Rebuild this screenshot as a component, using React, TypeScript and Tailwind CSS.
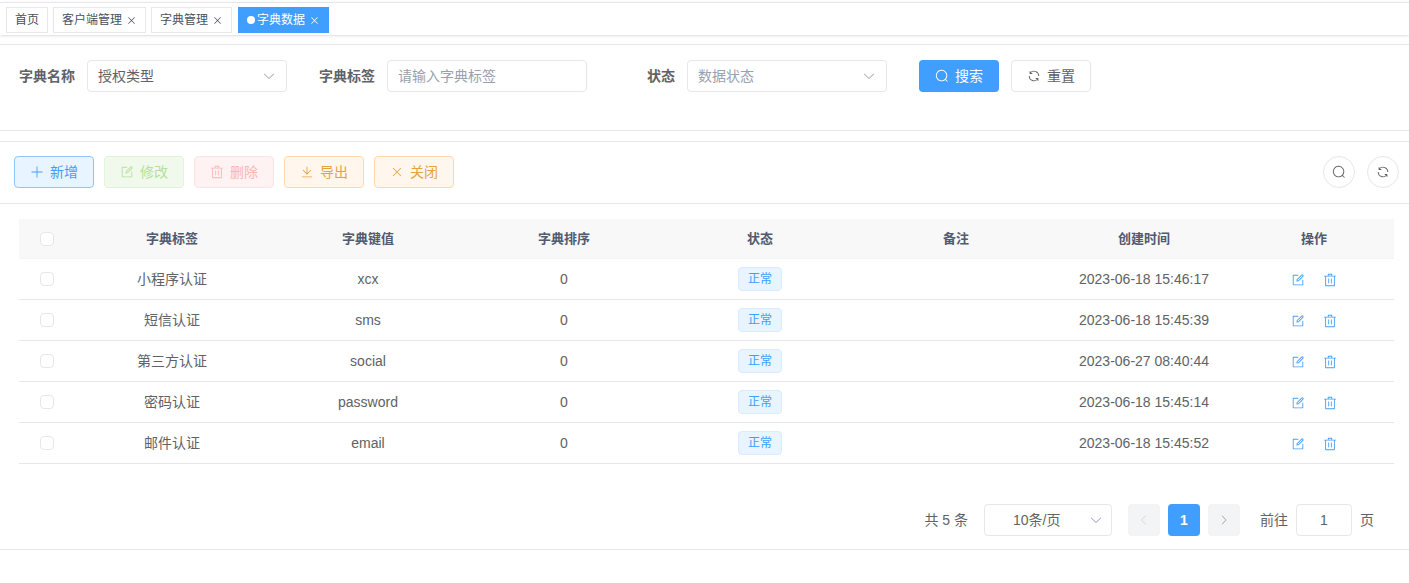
const rows = [
  { label: "小程序认证", value: "xcx", time: "2023-06-18 15:46:17" },
  { label: "短信认证", value: "sms", time: "2023-06-18 15:45:39" },
  { label: "第三方认证", value: "social", time: "2023-06-27 08:40:44" },
  { label: "密码认证", value: "password", time: "2023-06-18 15:45:14" },
  { label: "邮件认证", value: "email", time: "2023-06-18 15:45:52" },
];

const headers = ["字典标签", "字典键值", "字典排序", "状态", "备注", "创建时间", "操作"];

const gridCols = "grid grid-cols-[55px_repeat(5,1fr)_180px_160px] items-center text-center";

const icons = {
  search:
    "m795.904 750.72 124.992 124.928a32 32 0 0 1-45.248 45.248L750.656 795.904a416 416 0 1 1 45.248-45.248zM480 832a352 352 0 1 0 0-704 352 352 0 0 0 0 704z",
  refresh:
    "M771.776 794.88A384 384 0 0 1 128 512h64a320 320 0 0 0 555.712 216.448H654.72a32 32 0 1 1 0-64h149.056a32 32 0 0 1 32 32v148.928a32 32 0 1 1-64 0v-50.56zM276.288 295.616h92.992a32 32 0 0 1 0 64H220.16a32 32 0 0 1-32-32V178.56a32 32 0 0 1 64 0v50.56A384 384 0 0 1 896.128 512h-64a320 320 0 0 0-555.776-216.384z",
  plus: "M480 480V128a32 32 0 0 1 64 0v352h352a32 32 0 1 1 0 64H544v352a32 32 0 1 1-64 0V544H128a32 32 0 0 1 0-64h352z",
  edit: "M832 512a32 32 0 1 1 64 0v352a32 32 0 0 1-32 32H160a32 32 0 0 1-32-32V160a32 32 0 0 1 32-32h352a32 32 0 0 1 0 64H192v640h640V512z m-362.048 42.24 52.8-7.552L847.104 222.4a32 32 0 1 0-45.248-45.248L477.44 501.44l-7.552 52.8zm422.4-422.4a96 96 0 0 1 0 135.808l-331.84 331.84a32 32 0 0 1-18.112 9.088L436.8 623.68a32 32 0 0 1-36.224-36.224l15.104-105.6a32 32 0 0 1 9.024-18.112l331.904-331.84a96 96 0 0 1 135.744 0z",
  trash:
    "M160 256H96a32 32 0 0 1 0-64h256V95.936a32 32 0 0 1 32-32h256a32 32 0 0 1 32 32V192h256a32 32 0 1 1 0 64h-64v672a32 32 0 0 1-32 32H192a32 32 0 0 1-32-32V256zm448-64v-64H416v64h192zM224 896h576V256H224v640zm192-128a32 32 0 0 1-32-32V416a32 32 0 0 1 64 0v320a32 32 0 0 1-32 32zm192 0a32 32 0 0 1-32-32V416a32 32 0 0 1 64 0v320a32 32 0 0 1-32 32z",
  download:
    "M160 832h704a32 32 0 1 1 0 64H160a32 32 0 1 1 0-64zm384-253.696 236.288-236.352 45.248 45.248L508.8 704 192 387.2l45.248-45.248L480 584.704V128h64v450.304z",
  close:
    "M764.288 214.592 512 466.88 259.712 214.592a31.936 31.936 0 0 0-45.12 45.12L466.752 512 214.528 764.224a31.936 31.936 0 1 0 45.12 45.184L512 557.184l252.288 252.288a31.936 31.936 0 0 0 45.12-45.12L557.12 512.064l252.288-252.352a31.936 31.936 0 1 0-45.12-45.184z",
  down: "M831.872 340.864 512 652.672 192.128 340.864a30.592 30.592 0 0 0-42.752 0 29.12 29.12 0 0 0 0 41.6L489.664 714.24a32 32 0 0 0 44.672 0l340.288-331.712a29.12 29.12 0 0 0 0-41.728 30.592 30.592 0 0 0-42.752 0z",
  left: "M609.408 149.376 277.76 489.6a32 32 0 0 0 0 44.672l331.648 340.352a29.12 29.12 0 0 0 41.728 0 30.592 30.592 0 0 0 0-42.752L339.264 511.936l311.872-319.872a30.592 30.592 0 0 0 0-42.688 29.12 29.12 0 0 0-41.728 0z",
  right:
    "M340.864 149.312a30.592 30.592 0 0 0 0 42.752L652.736 512 340.864 831.872a30.592 30.592 0 0 0 0 42.752 29.12 29.12 0 0 0 41.728 0L714.24 534.336a32 32 0 0 0 0-44.672L382.592 149.376a29.12 29.12 0 0 0-41.728 0z",
};

function Icon({ name, className = "size-3.5" }: { name: keyof typeof icons; className?: string }) {
  return (
    <svg viewBox="0 0 1024 1024" fill="currentColor" className={className}>
      <path d={icons[name]} />
    </svg>
  );
}

function TagItem({ name, closable = true }: { name: string; closable?: boolean }) {
  return (
    <div className="flex h-6.5 items-center gap-1 border border-gray-200 bg-white px-2 text-xs text-[#495060]">
      {name}
      {closable && <Icon name="close" className="size-2.75" />}
    </div>
  );
}

function FormSelect({ text, placeholder }: { text: string; placeholder?: boolean }) {
  return (
    <div className="flex h-8 w-50 items-center justify-between rounded border border-gray-200 px-2.5 text-sm">
      <span className={placeholder ? "text-gray-400" : ""}>{text}</span>
      <Icon name="down" className="size-3.5 text-gray-400" />
    </div>
  );
}

function Label({ text }: { text: string }) {
  return <label className="w-14 text-right text-sm font-bold">{text}</label>;
}

function ToolButton({ icon, text, className }: { icon: React.ReactNode; text: string; className: string }) {
  return (
    <button className={`flex h-8 w-20 items-center justify-center gap-1.5 rounded border text-sm ${className}`}>
      {icon}
      {text}
    </button>
  );
}

export default function App() {
  return (
    <div
      className="min-h-screen bg-white pt-0.5 text-[#606266]"
      style={{ fontFamily: '"Liberation Sans", "Noto Sans CJK SC", sans-serif' }}
    >
      {/* Tags bar */}
      <div className="flex h-8.25 items-start gap-1.25 border-t border-gray-200 pt-1 pl-1.5 shadow">
        <TagItem name="首页" closable={false} />
        <TagItem name="客户端管理" />
        <TagItem name="字典管理" />
        <div className="ml-0.25 flex h-6.5 items-center gap-1 bg-[#409eff] px-2.25 text-xs text-white">
          <span className="flex items-center gap-0.5">
            <span className="size-2 rounded-full bg-white" />
            字典数据
          </span>
          <Icon name="close" className="size-2.75" />
        </div>
      </div>

      {/* Search form */}
      <div className="mt-2.25 h-21.75 border-y border-gray-200 pt-3.75 pl-4.75">
        <div className="flex items-center">
          <Label text="字典名称" />
          <div className="mr-8 ml-3">
            <FormSelect text="授权类型" />
          </div>
          <Label text="字典标签" />
          <input
            readOnly
            placeholder="请输入字典标签"
            className="mr-8 ml-3 h-8 w-50 rounded border border-gray-200 px-2.5 text-sm placeholder:text-gray-400"
          />
          <Label text="状态" />
          <div className="mr-8 ml-3">
            <FormSelect text="数据状态" placeholder />
          </div>
          <button className="flex h-8 w-20 items-center justify-center gap-1.5 rounded bg-[#409eff] text-sm text-white">
            <Icon name="search" />
            搜索
          </button>
          <button className="ml-3 flex h-8 w-20 items-center justify-center gap-1.5 rounded border border-gray-200 text-sm">
            <Icon name="refresh" />
            重置
          </button>
        </div>
      </div>

      {/* Table card */}
      <div className="mt-2.5 border-y border-gray-200">
        <div className="flex items-center justify-between border-b border-gray-200 pt-3.5 pr-2.5 pb-3.75 pl-3.5">
          <div className="flex gap-2.5">
            <ToolButton
              icon={<Icon name="plus" />}
              text="新增"
              className="border-blue-300 bg-[#e8f4ff] text-[#409eff]"
            />
            <ToolButton
              icon={<Icon name="edit" />}
              text="修改"
              className="border-[#e1f3d8] bg-[#f0f9eb] text-[#b3e19d]"
            />
            <ToolButton
              icon={<Icon name="trash" />}
              text="删除"
              className="border-red-100 bg-red-50 text-[#fab6b6]"
            />
            <ToolButton
              icon={<Icon name="download" />}
              text="导出"
              className="border-orange-200 bg-orange-50 text-[#e6a23c]"
            />
            <ToolButton
              icon={<Icon name="close" />}
              text="关闭"
              className="border-orange-200 bg-orange-50 text-[#e6a23c]"
            />
          </div>
          <div className="flex gap-3">
            <button className="flex size-8 items-center justify-center rounded-full border border-gray-200">
              <Icon name="search" />
            </button>
            <button className="flex size-8 items-center justify-center rounded-full border border-gray-200">
              <Icon name="refresh" />
            </button>
          </div>
        </div>

        <div className="pt-3.75 pr-3.75 pl-4.75">
          <div className={`${gridCols} h-10 border-b border-gray-100 bg-[#f8f8f9] text-[13px] font-bold text-[#515a6e]`}>
            <span className="mx-auto size-3.5 rounded-sm border border-gray-200 bg-white" />
            {headers.map((h) => (
              <span key={h}>{h}</span>
            ))}
          </div>
          {rows.map((row) => (
            <div key={row.value} className="border-b border-gray-200">
              <div className={`${gridCols} h-10 text-sm`}>
                <span className="mx-auto size-3.5 rounded-sm border border-gray-200 bg-white" />
                <span>{row.label}</span>
                <span>{row.value}</span>
                <span>0</span>
                <span className="mx-auto flex h-6 w-11 items-center justify-center rounded border border-blue-100 bg-[#e8f4ff] text-xs text-[#409eff]">
                  正常
                </span>
                <span />
                <span>{row.time}</span>
                <span className="flex items-center justify-center gap-4.5 pt-0.5 text-[#409eff]">
                  <Icon name="edit" />
                  <Icon name="trash" />
                </span>
              </div>
            </div>
          ))}

          {/* Pagination */}
          <div className="mt-10 mb-3.25 flex items-center justify-end pr-5 text-sm">
            <span>共 5 条</span>
            <div className="ml-4 flex h-8 w-32 items-center justify-between rounded border border-gray-200 pr-2 pl-7">
              10条/页
              <Icon name="down" className="size-3.5 text-gray-400" />
            </div>
            <button className="ml-4 flex size-8 items-center justify-center rounded-sm bg-gray-100 text-gray-300">
              <Icon name="left" className="size-3" />
            </button>
            <button className="ml-2 flex size-8 items-center justify-center rounded-sm bg-[#409eff] font-bold text-white">
              1
            </button>
            <button className="ml-2 flex size-8 items-center justify-center rounded-sm bg-gray-100 text-gray-400">
              <Icon name="right" className="size-3" />
            </button>
            <span className="ml-5">前往</span>
            <input
              readOnly
              value="1"
              className="mx-2 h-8 w-14 rounded border border-gray-200 text-center text-sm"
            />
            <span>页</span>
          </div>
        </div>
      </div>
    </div>
  );
}
